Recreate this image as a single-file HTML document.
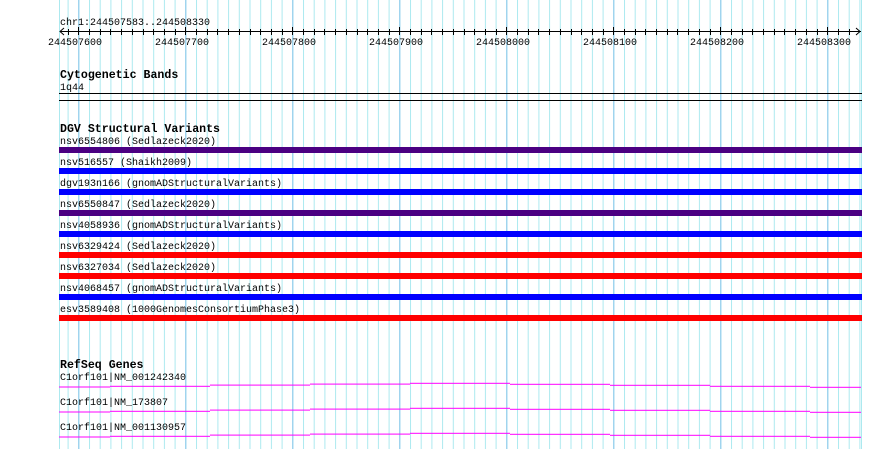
<!DOCTYPE html>
<html><head><meta charset="utf-8"><style>
html,body{margin:0;padding:0;background:#fff;}
svg{display:block;}
text{font-family:"Liberation Mono",monospace;font-size:10px;fill:#000;}
.b{font-weight:bold;font-size:11.6px;}
</style></head><body>
<svg width="890" height="449" viewBox="0 0 890 449" xmlns="http://www.w3.org/2000/svg">
<defs>
<pattern id="mi" x="78.3" y="0" width="10.7" height="449" patternUnits="userSpaceOnUse">
<rect x="0" y="0" width="1" height="449" fill="#ace9ef"/></pattern>
<pattern id="ma" x="78.3" y="0" width="107" height="449" patternUnits="userSpaceOnUse">
<rect x="0" y="0" width="1" height="449" fill="#86c6ea"/></pattern>
<clipPath id="c"><rect x="59" y="0" width="803" height="449"/></clipPath>
</defs>
<rect width="890" height="449" fill="#fff"/>
<g clip-path="url(#c)">
<rect x="59" y="0" width="803" height="449" fill="url(#mi)"/>
<rect x="59" y="0" width="803" height="449" fill="url(#ma)"/>
</g>
<rect x="59" y="0" width="1" height="449" fill="#ace9ef"/>
<rect x="861" y="0" width="1" height="449" fill="#ace9ef"/>

<text x="60" y="25">chr1:244507583..244508330</text>
<line x1="60" y1="31.5" x2="861" y2="31.5" stroke="#000" stroke-width="1"/>
<path d="M64 28 L60 31.5 L64 35 M856 28 L860 31.5 L856 35" stroke="#000" fill="none"/>
<g stroke="#000" stroke-width="1">
<line x1="78.5" y1="27" x2="78.5" y2="35"/><line x1="185.5" y1="27" x2="185.5" y2="35"/>
<line x1="292.5" y1="27" x2="292.5" y2="35"/><line x1="399.5" y1="27" x2="399.5" y2="35"/>
<line x1="506.5" y1="27" x2="506.5" y2="35"/><line x1="613.5" y1="27" x2="613.5" y2="35"/>
<line x1="720.5" y1="27" x2="720.5" y2="35"/><line x1="827.5" y1="27" x2="827.5" y2="35"/>
</g>
<rect x="59" y="29" width="803" height="6" fill="url(#mi)" style="display:none"/>
<g stroke="#000" stroke-width="1" stroke-dasharray="1 9.7" stroke-dashoffset="0">
</g>
<g id="ticks"></g>
<text x="48" y="45">244507600</text><text x="155" y="45">244507700</text>
<text x="262" y="45">244507800</text><text x="369" y="45">244507900</text>
<text x="476" y="45">244508000</text><text x="583" y="45">244508100</text>
<text x="690" y="45">244508200</text><text x="797" y="45">244508300</text>

<text class="b" x="60" y="78">Cytogenetic Bands</text>
<text x="60" y="90">1q44</text>
<rect x="59" y="93" width="803" height="1" fill="#000"/>
<rect x="59" y="100" width="803" height="1" fill="#000"/>

<text class="b" x="60" y="132">DGV Structural Variants</text>
<text x="60" y="144">nsv6554806 (Sedlazeck2020)</text><rect x="59" y="147" width="803" height="6" fill="#4b0082"/>
<text x="60" y="165">nsv516557 (Shaikh2009)</text><rect x="59" y="168" width="803" height="6" fill="#0000ff"/>
<text x="60" y="186">dgv193n166 (gnomADStructuralVariants)</text><rect x="59" y="189" width="803" height="6" fill="#0000ff"/>
<text x="60" y="207">nsv6550847 (Sedlazeck2020)</text><rect x="59" y="210" width="803" height="6" fill="#4b0082"/>
<text x="60" y="228">nsv4058936 (gnomADStructuralVariants)</text><rect x="59" y="231" width="803" height="6" fill="#0000ff"/>
<text x="60" y="249">nsv6329424 (Sedlazeck2020)</text><rect x="59" y="252" width="803" height="6" fill="#ff0000"/>
<text x="60" y="270">nsv6327034 (Sedlazeck2020)</text><rect x="59" y="273" width="803" height="6" fill="#ff0000"/>
<text x="60" y="291">nsv4068457 (gnomADStructuralVariants)</text><rect x="59" y="294" width="803" height="6" fill="#0000ff"/>
<text x="60" y="312">esv3589408 (1000GenomesConsortiumPhase3)</text><rect x="59" y="315" width="803" height="6" fill="#ff0000"/>

<text class="b" x="60" y="368">RefSeq Genes</text>
<text x="60" y="380">C1orf101|NM_001242340</text>
<text x="60" y="405">C1orf101|NM_173807</text>
<text x="60" y="430">C1orf101|NM_001130957</text>
<g fill="#ff00ff">
<g id="g1">
<rect x="59" y="386.5" width="51" height="1"/><rect x="110" y="385.8" width="100" height="1"/>
<rect x="210" y="384.6" width="100" height="1"/><rect x="310" y="383.6" width="100" height="1"/>
<rect x="410" y="382.8" width="100" height="1"/><rect x="510" y="383.8" width="100" height="1"/>
<rect x="610" y="384.8" width="100" height="1"/><rect x="710" y="385.8" width="100" height="1"/>
<rect x="810" y="386.8" width="51" height="1"/>
</g>
<use href="#g1" y="25"/>
<use href="#g1" y="50"/>
</g>
</svg>
<script>
var g=document.getElementById('ticks'),s='';
for(var k=-1;k<74;k++){var x=78.3+10.7*k;if(x<59||x>858)continue;if(k%10==0)continue;
x=Math.round(x)+0.5;s+='<line x1="'+x+'" y1="29" x2="'+x+'" y2="35" stroke="#000"/>';}
g.innerHTML=s;
</script>
</body></html>
